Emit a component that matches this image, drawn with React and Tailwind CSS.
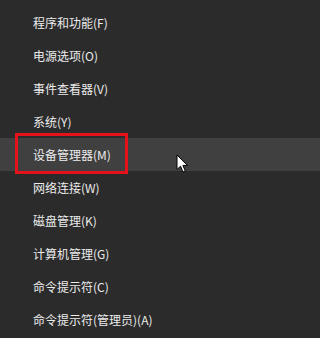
const items = [
  "程序和功能(F)",
  "电源选项(O)",
  "事件查看器(V)",
  "系统(Y)",
  "设备管理器(M)",
  "网络连接(W)",
  "磁盘管理(K)",
  "计算机管理(G)",
  "命令提示符(C)",
  "命令提示符(管理员)(A)",
];

const Cursor = () => (
  <svg
    className="absolute left-[176px] top-[16px]"
    width="13"
    height="20"
    viewBox="0 0 13 20"
  >
    <path
      d="M1 1 L1 15.5 L4.5 12.2 L7 18 L9.3 17 L6.9 11.4 L11.5 11.4 Z"
      fill="#ffffff"
      stroke="#000000"
      strokeWidth="1"
      strokeLinejoin="miter"
    />
  </svg>
);

export default function App() {
  return (
    <div
      className="w-full min-w-[225px] h-[338px] bg-[#2b2b2b] overflow-hidden pt-[6px] text-[12px] text-[#ececec]"
      style={{ fontFamily: '"Noto Sans CJK SC", "Liberation Sans", sans-serif' }}
    >
      {items.map((label, i) => {
        const active = i === 4;
        return (
          <div
            key={label}
            className={`relative h-[33px] flex items-center pl-[33px] leading-none ${
              active ? "bg-[#404040]" : ""
            }`}
          >
            <span>{label}</span>
            {active && (
              <>
                <div className="absolute left-[15px] top-[-5px] w-[113px] h-[41px] border-[3px] border-[#e3121b]" />
                <Cursor />
              </>
            )}
          </div>
        );
      })}
    </div>
  );
}
